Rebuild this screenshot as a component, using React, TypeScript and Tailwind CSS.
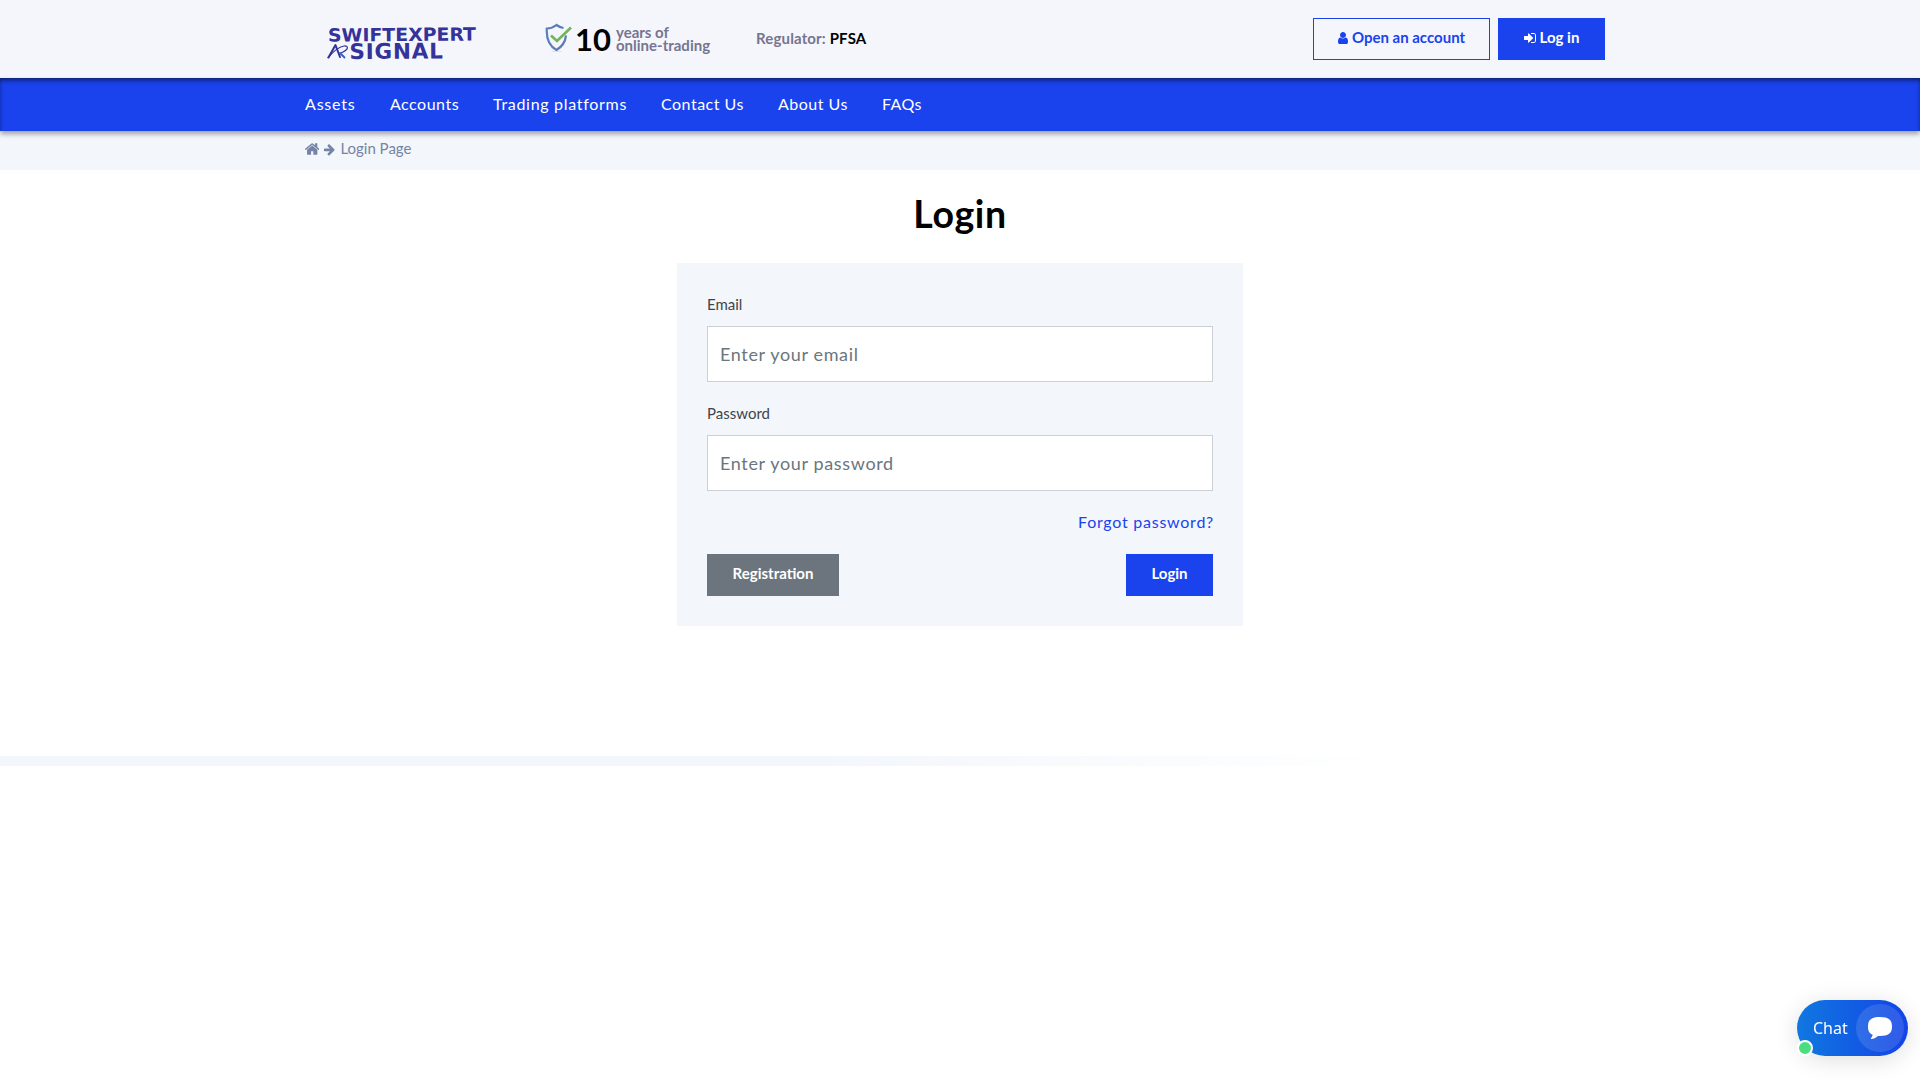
import React, { useState } from 'react';

interface IconProps {
  size?: number;
  className?: string;
}

const UserIcon: React.FC<IconProps> = ({ size = 14, className }) => (
  <svg width={(size * 10) / 14} height={size} viewBox="256 0 1280 1792" fill="currentColor" className={className}>
    <path d="M1536 1399q0 109-62.5 187t-150.5 78h-854q-88 0-150.5-78t-62.5-187q0-85 8.5-160.5t31.5-152 58.5-131 94-89 134.5-34.5q131 128 313 128t313-128q76 0 134.5 34.5t94 89 58.5 131 31.5 152 8.5 160.5zm-256-887q0 159-112.5 271.5t-271.5 112.5-271.5-112.5-112.5-271.5 112.5-271.5 271.5-112.5 271.5 112.5 112.5 271.5z" />
  </svg>
);

const SignInIcon: React.FC<IconProps> = ({ size = 14, className }) => (
  <svg width={(size * 12) / 14} height={size} viewBox="128 0 1536 1792" fill="currentColor" className={className}>
    <path d="M1312 896q0 26-19 45l-544 544q-19 19-45 19t-45-19-19-45v-288h-448q-26 0-45-19t-19-45v-384q0-26 19-45t45-19h448v-288q0-26 19-45t45-19 45 19l544 544q19 19 19 45zm352-352v704q0 119-84.5 203.5t-203.5 84.5h-320q-13 0-22.5-9.5t-9.5-22.5q0-4-1-20t-.5-26.5 3-23.5 10-19.5 20.5-6.5h320q66 0 113-47t47-113v-704q0-66-47-113t-113-47h-312l-11.5-1-11.5-3-8-5.5-7-9-2-13.5q0-4-1-20t-.5-26.5 3-23.5 10-19.5 20.5-6.5h320q119 0 203.5 84.5t84.5 203.5z" />
  </svg>
);

const HomeIcon: React.FC<IconProps> = ({ size = 16, className }) => (
  <svg width={size * 0.9} height={size} viewBox="90 0 1612 1792" fill="currentColor" className={className}>
    <path d="M1472 992v480q0 26-19 45t-45 19h-384v-384h-256v384h-384q-26 0-45-19t-19-45v-480q0-1 .5-3t.5-3l575-474 575 474q1 2 1 6zm223-69l-62 74q-8 9-21 11h-3q-13 0-21-7l-692-577-692 577q-12 8-24 7-13-2-21-11l-62-74q-8-10-7-23.5t11-21.5l719-599q32-26 76-26t76 26l244 204v-195q0-14 9-23t23-9h192q14 0 23 9t9 23v408l219 182q10 8 11 21.5t-7 23.5z" />
  </svg>
);

const ArrowIcon: React.FC<IconProps> = ({ size = 14, className }) => (
  <svg width={size} height={size} viewBox="0 0 1792 1792" fill="currentColor" className={className}>
    <path d="M1600 960q0 54-37 91l-651 651q-39 37-91 37-51 0-90-37l-75-75q-38-38-38-91t38-91l293-293h-704q-52 0-84.5-37.5t-32.5-90.5v-128q0-53 32.5-90.5t84.5-37.5h704l-293-294q-38-36-38-90t38-90l75-75q38-38 90-38 53 0 91 38l651 651q37 35 37 90z" />
  </svg>
);

const Logo = () => (
  <svg width="160" height="50" viewBox="0 0 160 50" className="block overflow-visible">
    <g fill="#343399" fontFamily="'DejaVu Sans', sans-serif" fontWeight="bold">
      <text x="2" y="20.5" fontSize="18" textLength="148" lengthAdjust="spacingAndGlyphs" transform="rotate(-0.4 3 19)">
        SWIFTEXPERT
      </text>
      <text x="23.5" y="38" fontSize="21.5" textLength="93.5" lengthAdjust="spacing" transform="rotate(-0.4 24 37)">
        SIGNAL
      </text>
    </g>
    {/* Monogram with the swoosh */}
    <g fill="none" stroke="#343399" strokeLinecap="round" strokeLinejoin="round">
      <path d="M2.500 36.500 9.500 24l4.500 12" strokeWidth="2" />
      <path d="M2 36.500C7 31 13 25.500 18 25c5-.5 5 3.500-3 7" strokeWidth="1.2" />
      <path d="m14 32 4.500 4.500" stroke="#2f5fc8" strokeWidth="1.8" />
    </g>
  </svg>
);

const ShieldIcon = () => (
  <svg width="27" height="30" viewBox="0 0 27 30" fill="none" className="block">
    <path
      d="M18.500 5C15.500 4.500 13.500 3.500 11.500 2 9 4 5.500 5.300 1.800 5.500c-.6 10 1.800 17 9.700 21.500 6-3.500 8.800-8.500 9.500-14.500"
      stroke="#5b7db8"
      strokeWidth="2.2"
    />
    <path d="m6 12.500 6 5.500L26 4.500" stroke="#72b55c" strokeWidth="2.7" />
    <path d="M6.500 28.500h10" stroke="#d9dbe2" strokeWidth=".8" />
  </svg>
);

const navItems = [
  { label: 'Assets', className: 'w-[51px] tracking-[0.8px]' },
  { label: 'Accounts', className: 'w-[69px] tracking-[0.5px]' },
  { label: 'Trading platforms', className: 'w-[134px] tracking-[0.7px]' },
  { label: 'Contact Us', className: 'w-[83px] tracking-[0.5px]' },
  { label: 'About Us', className: 'w-[70px] tracking-[0.5px]' },
  { label: 'FAQs', className: 'w-[40px] tracking-[0.4px]' },
];

interface FieldProps {
  id: string;
  type: string;
  label: string;
  placeholder: string;
  value: string;
  onChange: (value: string) => void;
}

const Field: React.FC<FieldProps> = ({ id, type, label, placeholder, value, onChange }) => (
  <div className="flex flex-col">
    <label htmlFor={id} className="mb-[11px] h-[21px] text-[15px] leading-[21px] text-[#3f444b]">
      {label}
    </label>
    <input
      id={id}
      type={type}
      value={value}
      placeholder={placeholder}
      onChange={(e) => onChange(e.target.value)}
      className="h-14 w-full border border-[#ced0d8] bg-white px-3 text-lg tracking-[0.65px] text-[#495057] outline-none placeholder:text-[#6c757d]"
    />
  </div>
);

const Header = () => (
  <header className="h-[78px] bg-[#f5f6fc]">
    <div className="mx-auto flex h-full w-[1310px] items-start">
      <div className="ml-[21px] mt-[21px] w-[219px]">
        <Logo />
      </div>
      <div className="mt-[23px] flex w-[211px] items-start">
        <ShieldIcon />
        <span className="ml-[3px] w-9 text-[31px] font-bold leading-8 text-black">10</span>
        <span className="ml-[5px] mt-[3px] flex flex-col whitespace-nowrap text-[15px] font-bold leading-[13px] text-[#75758f]">
          <span>years of</span>
          <span>online-trading</span>
        </span>
      </div>
      <div className="mt-7 whitespace-nowrap text-[15px] font-bold leading-[21px] tracking-[0.15px] text-[#75758f]">
        Regulator: <span className="text-black">PFSA</span>
      </div>
      <div className="ml-auto mr-[10px] mt-[18px] flex gap-2 text-[15px] font-bold">
        <button className="flex h-[42px] w-[177px] items-center justify-center gap-1 border border-[#1a43ee] pb-[3px] text-[#1a43ee]">
          <UserIcon />
          Open an account
        </button>
        <button className="flex h-[42px] w-[107px] items-center justify-center gap-1 bg-[#1a43ee] pb-[3px] text-white">
          <SignInIcon />
          Log in
        </button>
      </div>
    </div>
  </header>
);

const ChatButton = () => (
  <button className="fixed bottom-6 right-3 flex h-14 w-[111px] items-center rounded-full bg-linear-to-r/srgb from-[#1078e0] to-[#1443e6] pl-4 text-white shadow-[0_4px_24px_rgba(0,0,0,0.13)]">
    <span className="w-[43px] text-left font-['Noto_Sans',sans-serif] text-base">Chat</span>
    <span className="flex size-12 items-center justify-center rounded-full bg-white/12">
      <svg width="24" height="24" viewBox="0 0 24 24" fill="currentColor">
        <path d="M12 1C3.500 1 0 3.500 0 10.500c0 4.500 1.300 7 4.700 8.300-.2 1.300-.8 2.300-1.600 3.200-.5.600 0 1.200.8 1 3-.6 4.800-2 6.100-3.100H12c8.500 0 12-2.500 12-9.400S20.500 1 12 1Z" />
      </svg>
    </span>
    <span className="absolute bottom-0 left-0 size-4 rounded-full border-2 border-white bg-[#4ade80]" />
  </button>
);

export default function App() {
  const [email, setEmail] = useState('');
  const [password, setPassword] = useState('');

  return (
    <div className="h-screen overflow-hidden bg-white font-[Lato,sans-serif]">
      <Header />

      <nav className="relative h-[53px] bg-[#1a43ee] shadow-[0_3px_5px_rgba(0,0,0,0.35),inset_0_3px_5px_-1px_rgba(0,0,0,0.6)]">
        <div className="mx-auto flex h-full w-[1310px] items-center gap-[34px] pb-0.5 text-base text-white">
          {navItems.map((item) => (
            <a key={item.label} href="#" className={`whitespace-nowrap ${item.className}`}>
              {item.label}
            </a>
          ))}
        </div>
      </nav>

      <div className="h-[39px] bg-[#f3f6fb]">
        <div className="mx-auto flex h-full w-[1310px] items-center text-[15px] text-[#7384a6]">
          <HomeIcon className="-mt-1" />
          <ArrowIcon size={13} className="-mt-0.5 ml-1" />
          <span className="-mt-1 ml-1">Login Page</span>
        </div>
      </div>

      <main>
        <h1 className="pt-[19px] text-center text-[37.5px] font-bold leading-[50px] tracking-[0.6px] text-black">Login</h1>
        <form className="mx-auto mt-6 flex h-[363px] w-[566px] flex-col bg-[#f3f6fb] px-[30px] pt-[31px]">
          <Field id="email" type="email" label="Email" placeholder="Enter your email" value={email} onChange={setEmail} />
          <div className="h-[21px]" />
          <Field
            id="password"
            type="password"
            label="Password"
            placeholder="Enter your password"
            value={password}
            onChange={setPassword}
          />
          <a href="#" className="mt-[19px] -mr-px self-end text-base tracking-[0.75px] text-[#1a43ee]">
            Forgot password?
          </a>
          <div className="mt-5 flex justify-between text-[15px] font-bold text-white">
            <button type="button" className="h-[42px] w-[132px] bg-[#6c757d] pb-[3px]">
              Registration
            </button>
            <button type="button" className="h-[42px] w-[87px] bg-[#1a43ee] pb-[3px]">
              Login
            </button>
          </div>
        </form>
      </main>

      <div className="mt-[130px] h-2.5 bg-linear-to-r from-[#f3f6fb] from-43% to-white to-72%" />

      <ChatButton />
    </div>
  );
}
